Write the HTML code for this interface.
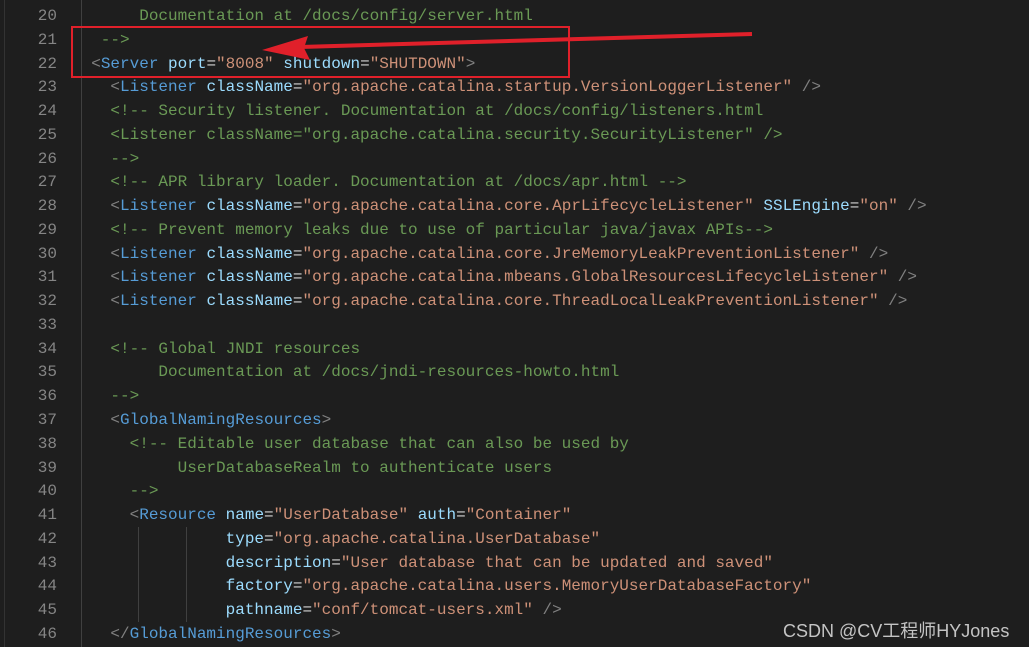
<!DOCTYPE html>
<html><head><meta charset="utf-8"><style>
html,body{margin:0;padding:0;background:#1e1e1e;width:1029px;height:647px;overflow:hidden;position:relative}
.code{position:absolute;left:0;top:5px;font-family:"Liberation Mono",monospace;font-size:16px;line-height:23.77px;white-space:pre;color:#d4d4d4}
.ln{display:inline-block;width:57px;text-align:right;color:#858585}
.t{position:absolute;left:72px;top:0}
.p{color:#808080}.n{color:#569cd6}.a{color:#9cdcfe}.s{color:#ce9178}.c{color:#6a9955}
.g{position:absolute;width:1px;background:#404040}
</style></head><body>
<div style="position:absolute;left:4px;top:0;width:1px;height:647px;background:#333"></div>
<div class="g" style="left:81px;top:0;height:647px"></div>
<div class="g" style="left:138px;top:527px;height:95px"></div>
<div class="g" style="left:186px;top:527px;height:95px"></div>
<div class="code"><span class="ln">20</span>
<span class="ln">21</span>
<span class="ln">22</span>
<span class="ln">23</span>
<span class="ln">24</span>
<span class="ln">25</span>
<span class="ln">26</span>
<span class="ln">27</span>
<span class="ln">28</span>
<span class="ln">29</span>
<span class="ln">30</span>
<span class="ln">31</span>
<span class="ln">32</span>
<span class="ln">33</span>
<span class="ln">34</span>
<span class="ln">35</span>
<span class="ln">36</span>
<span class="ln">37</span>
<span class="ln">38</span>
<span class="ln">39</span>
<span class="ln">40</span>
<span class="ln">41</span>
<span class="ln">42</span>
<span class="ln">43</span>
<span class="ln">44</span>
<span class="ln">45</span>
<span class="ln">46</span>
<div class="t"><span class="c">       Documentation at /docs/config/server.html</span>
<span class="c">   --&gt;</span>
  <span class="p">&lt;</span><span class="n">Server</span> <span class="a">port</span>=<span class="s">"8008"</span> <span class="a">shutdown</span>=<span class="s">"SHUTDOWN"</span><span class="p">&gt;</span>
    <span class="p">&lt;</span><span class="n">Listener</span> <span class="a">className</span>=<span class="s">"org.apache.catalina.startup.VersionLoggerListener"</span> <span class="p">/&gt;</span>
    <span class="c">&lt;!-- Security listener. Documentation at /docs/config/listeners.html</span>
    <span class="c">&lt;Listener className="org.apache.catalina.security.SecurityListener" /&gt;</span>
    <span class="c">--&gt;</span>
    <span class="c">&lt;!-- APR library loader. Documentation at /docs/apr.html --&gt;</span>
    <span class="p">&lt;</span><span class="n">Listener</span> <span class="a">className</span>=<span class="s">"org.apache.catalina.core.AprLifecycleListener"</span> <span class="a">SSLEngine</span>=<span class="s">"on"</span> <span class="p">/&gt;</span>
    <span class="c">&lt;!-- Prevent memory leaks due to use of particular java/javax APIs--&gt;</span>
    <span class="p">&lt;</span><span class="n">Listener</span> <span class="a">className</span>=<span class="s">"org.apache.catalina.core.JreMemoryLeakPreventionListener"</span> <span class="p">/&gt;</span>
    <span class="p">&lt;</span><span class="n">Listener</span> <span class="a">className</span>=<span class="s">"org.apache.catalina.mbeans.GlobalResourcesLifecycleListener"</span> <span class="p">/&gt;</span>
    <span class="p">&lt;</span><span class="n">Listener</span> <span class="a">className</span>=<span class="s">"org.apache.catalina.core.ThreadLocalLeakPreventionListener"</span> <span class="p">/&gt;</span>

    <span class="c">&lt;!-- Global JNDI resources</span>
<span class="c">         Documentation at /docs/jndi-resources-howto.html</span>
    <span class="c">--&gt;</span>
    <span class="p">&lt;</span><span class="n">GlobalNamingResources</span><span class="p">&gt;</span>
      <span class="c">&lt;!-- Editable user database that can also be used by</span>
<span class="c">           UserDatabaseRealm to authenticate users</span>
      <span class="c">--&gt;</span>
      <span class="p">&lt;</span><span class="n">Resource</span> <span class="a">name</span>=<span class="s">"UserDatabase"</span> <span class="a">auth</span>=<span class="s">"Container"</span>
                <span class="a">type</span>=<span class="s">"org.apache.catalina.UserDatabase"</span>
                <span class="a">description</span>=<span class="s">"User database that can be updated and saved"</span>
                <span class="a">factory</span>=<span class="s">"org.apache.catalina.users.MemoryUserDatabaseFactory"</span>
                <span class="a">pathname</span>=<span class="s">"conf/tomcat-users.xml"</span> <span class="p">/&gt;</span>
    <span class="p">&lt;/</span><span class="n">GlobalNamingResources</span><span class="p">&gt;</span></div></div>
<div style="position:absolute;left:71px;top:26px;width:495px;height:48px;border:2px solid #e0202a"></div>
<svg style="position:absolute;left:0;top:0" width="1029" height="647">
<path d="M752,34 L300,47" stroke="#e0202a" stroke-width="4" fill="none"/>
<path d="M262,50 L308,36 L304,48 L310,60 Z" fill="#e0202a"/>
</svg>
<div style="position:absolute;left:783px;top:617px;font-family:'Liberation Sans','Noto Sans CJK SC',sans-serif;font-size:18px;color:#c4c4c4">CSDN @CV工程师HYJones</div>
</body></html>
